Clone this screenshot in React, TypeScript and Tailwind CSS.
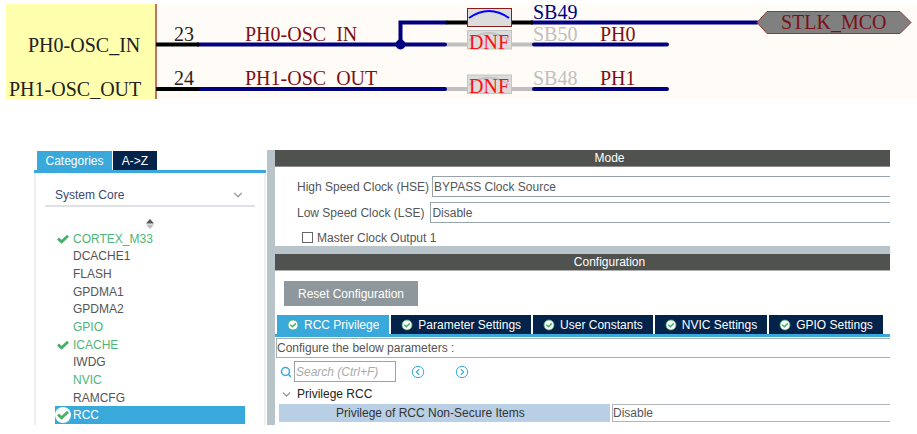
import { ChevronDown, Search } from "lucide-react";
import { useState } from "react";

const peripherals = [
    { name: "CORTEX_M33", active: true, checked: true },
    { name: "DCACHE1" },
    { name: "FLASH" },
    { name: "GPDMA1" },
    { name: "GPDMA2" },
    { name: "GPIO", active: true },
    { name: "ICACHE", active: true, checked: true },
    { name: "IWDG" },
    { name: "NVIC", active: true },
    { name: "RAMCFG" },
    { name: "RCC", checked: true },
];

const configTabs = [
    "RCC Privilege",
    "Parameter Settings",
    "User Constants",
    "NVIC Settings",
    "GPIO Settings",
];

function Check() {
    return (
        <svg viewBox="0 0 12 10" className="h-[10px] w-[12px]" fill="none" aria-hidden="true">
            <path d="M1 4.4 L4.6 7.8 L11 1.8" stroke="#45b06c" strokeWidth="2.8" />
        </svg>
    );
}

function RoundCheck() {
    return (
        <svg viewBox="0 0 12 12" className="h-3 w-3 shrink-0" fill="none" aria-hidden="true">
            <circle cx="6" cy="6" r="5" fill="#fff" stroke="#45b06c" strokeWidth="0.8" />
            <path d="M3.2 5.8 L5.4 7.8 L8.8 4.4" stroke="#45b06c" strokeWidth="1.5" />
        </svg>
    );
}

function CircleArrow({ left = false }: { left?: boolean }) {
    return (
        <svg viewBox="0 0 14 14" className="h-[14px] w-[14px]" fill="none" stroke="#39a9dc" aria-hidden="true">
            <circle cx="7" cy="7" r="5.7" />
            <path d={left ? "M8.2 4.2 L5.4 7 L8.2 9.8" : "M5.8 4.2 L8.6 7 L5.8 9.8"} strokeWidth="1.2" />
        </svg>
    );
}

function Schematic() {
    return (
        <svg
            viewBox="6 4 911 95"
            className="block w-full bg-[#fffcf7]"
            fontFamily="'Liberation Serif', serif"
            fontSize="20"
        >
            {/* MCU body */}
            <rect x="6" y="4" width="149" height="95" fill="#ffffae" />
            <path d="M156 4 V99" stroke="#bd7468" strokeWidth="2" />
            <g fill="#222">
                <text x="28" y="52">PH0-OSC_IN</text>
                <text x="9" y="96">PH1-OSC_OUT</text>
                <text x="174" y="41">23</text>
                <text x="174" y="85">24</text>
            </g>

            {/* Net names */}
            <g fill="#7d1016">
                <text x="245" y="41">PH0-OSC_IN</text>
                <text x="245" y="85">PH1-OSC_OUT</text>
                <text x="600" y="41">PH0</text>
                <text x="600" y="85">PH1</text>
            </g>
            <text x="533" y="19" fill="#000080">SB49</text>
            <g fill="#c0c0c0">
                <text x="533" y="41">SB50</text>
                <text x="533" y="85">SB48</text>
            </g>

            {/* Wires */}
            <g fill="none" strokeWidth="4">
                <path d="M446 44.5 H468 M511 44.5 H533 M446 89 H468 M511 89 H533" stroke="#c0c0c0" />
                <path
                    d="M198 44.5 H445 M534 44.5 H667 M198 89 H445 M534 89 H667 M446 22.5 H400.5 V44.5 M532 22.5 H757"
                    stroke="#000080"
                    strokeLinecap="round"
                />
                <path d="M156 44.5 H199 M156 89 H199 M446 22.5 H468 M511 22.5 H533" stroke="#000" />
            </g>
            <circle cx="400.5" cy="44.5" r="5" fill="#000080" />

            {/* Solder bridges */}
            <rect x="467.5" y="8.5" width="44" height="18" fill="#dcdcdc" stroke="#861c1c" />
            <path d="M469 18 Q489 4 509 18" fill="none" stroke="#0000ff" strokeWidth="2" />
            {[30.5, 75].map((y) => (
                <g key={y}>
                    <rect x="467.5" y={y} width="44" height="18.5" fill="#dcdcdc" stroke="#c4c4c4" />
                    <path d={`M469 ${y + 10} Q489 ${y - 5} 509 ${y + 10}`} fill="none" stroke="#c4c4c4" strokeWidth="2" />
                    <text x="469" y={y + 18} fill="#ff1010">DNF</text>
                </g>
            ))}

            {/* Off-sheet port */}
            <path d="M757 22.5 L767 11.5 H900 L911 22.5 L900 33.5 H767 Z" fill="#808080" stroke="#8a3a3a" />
            <text x="781" y="29" fill="#7d1016">STLK_MCO</text>
        </svg>
    );
}

function Sidebar() {
    const [selected, setSelected] = useState("RCC");

    return (
        <aside className="flex w-[232px] shrink-0 flex-col pt-px">
            <div className="flex gap-px border-b-[3px] border-[#39a9dc] pl-[3px]">
                <button className="h-[19px] w-[75px] bg-[#39a9dc] text-white">Categories</button>
                <button className="h-[19px] w-[44px] bg-[#03234b] text-white">A-&gt;Z</button>
            </div>
            <div className="flex flex-1 flex-col border-x-2 border-[#f0f0f0] px-[9px]">
                <button className="flex h-[34px] items-center justify-between border-b-2 border-[#dde1e6] px-[10px] pt-[11px] text-[#39496f]">
                    System Core
                    <ChevronDown className="h-[14px] w-[14px] text-[#999]" strokeWidth={2} />
                </button>
                <button className="flex h-[23px] items-end justify-center" aria-label="Sort">
                    <svg viewBox="0 0 8 10" className="mb-px h-[10px] w-[8px]" aria-hidden="true">
                        <path d="M4 0 L8 4.4 H0 Z" fill="#555" />
                        <path d="M4 10 L8 5.6 H0 Z" fill="#bbb" />
                    </svg>
                </button>
                <ul className="flex flex-1 flex-col px-[10px] pb-px">
                    {peripherals.map((item) => {
                        const isSelected = item.name === selected;
                        return (
                            <li key={item.name} className="flex flex-1">
                                <button
                                    onClick={() => setSelected(item.name)}
                                    className={`flex w-full items-center gap-[2px] text-left ${isSelected
                                            ? "bg-[#39a9dc] text-white"
                                            : item.active
                                                ? "text-[#4fb576]"
                                                : "text-[#555]"
                                        }`}
                                >
                                    <span
                                        className={`flex h-4 w-4 items-center justify-center ${isSelected ? "rounded-full bg-white" : ""}`}
                                    >
                                        {item.checked && <Check />}
                                    </span>
                                    {item.name}
                                </button>
                            </li>
                        );
                    })}
                </ul>
            </div>
        </aside>
    );
}

function ModePanel() {
    return (
        <section className="bg-white">
            <h2 className="h-[17px] border-b border-[#8c8c8c] bg-[#50524f] pl-[54px] text-center text-white">
                Mode
            </h2>
            <div className="flex flex-col gap-[5px] pt-[9px] pl-[22px]">
                <div className="flex items-center gap-[3px]">
                    <label htmlFor="hse">High Speed Clock (HSE)</label>
                    <select
                        id="hse"
                        className="h-[21px] flex-1 appearance-none border border-r-0 border-[#98a2aa] px-px"
                    >
                        <option>BYPASS Clock Source</option>
                    </select>
                </div>
                <div className="flex items-center gap-[6px]">
                    <label htmlFor="lse">Low Speed Clock (LSE)</label>
                    <select
                        id="lse"
                        className="h-[21px] flex-1 appearance-none border border-r-0 border-[#98a2aa] px-px"
                    >
                        <option>Disable</option>
                    </select>
                </div>
                <label className="flex h-[18px] items-center gap-[4px] pt-px pl-[5px]">
                    <input type="checkbox" className="h-[11px] w-[11px] appearance-none border border-[#666] checked:bg-[#39a9dc]" />
                    Master Clock Output 1
                </label>
            </div>
        </section>
    );
}

function ConfigurationPanel() {
    const [tab, setTab] = useState("RCC Privilege");

    return (
        <section className="bg-white">
            <h2 className="h-[17px] border-b border-[#b0b0b0] bg-[#50524f] pl-[54px] text-center text-white">
                Configuration
            </h2>
            <button className="mt-[10px] ml-[9px] h-[25px] w-[134px] bg-[#8e979b] text-white">
                Reset Configuration
            </button>
            <div className="mt-[9px] flex gap-[2px] border-b-[3px] border-[#39a9dc] pl-[2px]">
                {configTabs.map((name) => (
                    <button
                        key={name}
                        onClick={() => setTab(name)}
                        className={`flex h-[19px] items-center gap-[5px] px-[10px] whitespace-nowrap text-white ${name === tab ? "bg-[#39a9dc]" : "bg-[#03234b]"}`}
                    >
                        <RoundCheck />
                        {name}
                    </button>
                ))}
            </div>
            <p className="mt-px ml-px h-[20px] border border-r-0 border-[#a5adb3] leading-[18px]">
                Configure the below parameters :
            </p>
            <div className="mt-[3px] flex h-[21px] items-center pl-[5px]">
                <label htmlFor="search" aria-label="Search">
                    <Search className="h-3 w-3 text-[#39a9dc]" strokeWidth={3} />
                </label>
                <input
                    id="search"
                    placeholder="Search (Ctrl+F)"
                    className="ml-[2px] h-[21px] w-[102px] border border-[#98a2aa] px-px placeholder:text-[#aaa] placeholder:italic"
                />
                <button className="ml-[15px]" aria-label="Previous">
                    <CircleArrow left />
                </button>
                <button className="ml-[30px]" aria-label="Next">
                    <CircleArrow />
                </button>
            </div>
            <button className="flex h-[22px] items-center gap-[4px] pt-[2px] pl-[5px] text-[#222]">
                <ChevronDown className="h-[13px] w-[13px] text-[#888]" strokeWidth={2} />
                Privilege RCC
            </button>
            <div className="flex pb-[3px] pl-[4px]">
                <label htmlFor="privilege" className="h-[18px] w-[331px] bg-[#b8cfe6] pl-[57px] leading-[18px] text-[#333]">
                    Privilege of RCC Non-Secure Items
                </label>
                <select
                    id="privilege"
                    className="ml-[2px] h-[18px] flex-1 appearance-none border border-r-0 border-[#b0b5b9] leading-4"
                >
                    <option>Disable</option>
                </select>
            </div>
        </section>
    );
}

export default function App() {
    return (
        <main className="bg-white">
            <div className="pt-1 pl-[6px]">
                <Schematic />
            </div>
            <div className="mt-[51px] mr-[27px] ml-[34px] flex font-['Liberation_Sans',sans-serif] text-xs text-[#555]">
                <Sidebar />
                <div className="ml-px flex flex-1 flex-col gap-2 bg-[#b8c4ca] pl-[8px]">
                    <ModePanel />
                    <ConfigurationPanel />
                </div>
            </div>
        </main>
    );
}
